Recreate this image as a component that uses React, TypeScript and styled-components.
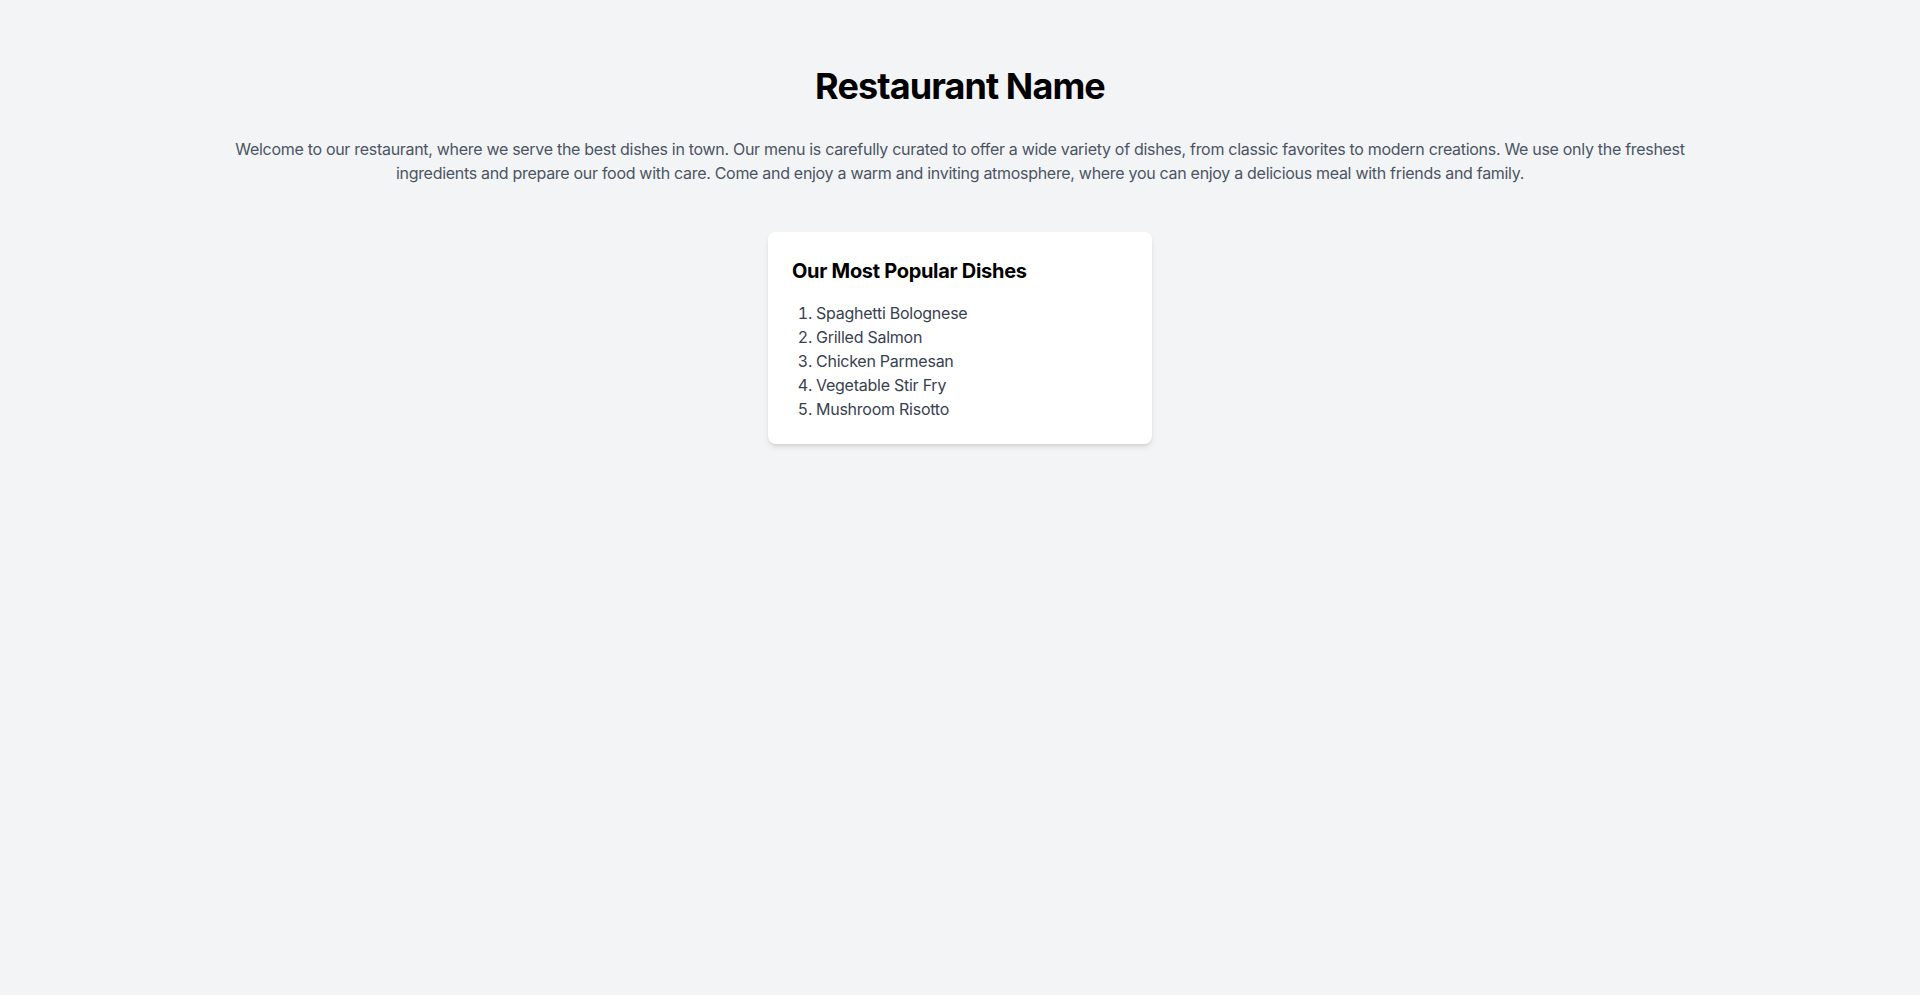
import React from "react";
import styled, { createGlobalStyle } from "styled-components";

const GlobalStyle = createGlobalStyle`
  *, *::before, *::after { box-sizing: border-box; }
  html, body { margin: 0; padding: 0; }
  body {
    background: #f3f4f6;
    font-family: Inter, "Noto Sans", "Liberation Sans", sans-serif;
    -webkit-font-smoothing: antialiased;
  }
`;

const Page = styled.div`
  min-height: 995px;
  background: #f3f4f6;
`;

const Container = styled.main`
  max-width: 1536px;
  margin: 0 auto;
  padding: 64px 16px;
  display: flex;
  flex-direction: column;
  align-items: center;
`;

const Title = styled.h1`
  margin: 0 0 30px;
  padding-top: 2px;
  font-size: 36px;
  line-height: 40px;
  font-weight: 700;
  letter-spacing: -0.9px;
  color: #000;
  text-align: center;
`;

const Intro = styled.p`
  margin: 0 0 47px;
  padding-top: 1px;
  font-size: 16px;
  line-height: 24px;
  letter-spacing: -0.3px;
  color: #4b5563;
  text-align: center;
`;

const Card = styled.section`
  width: 384px;
  background: #fff;
  border-radius: 8px;
  padding: 25px 24px 23px;
  box-shadow: 0 4px 6px -1px rgba(0, 0, 0, 0.1), 0 2px 4px -2px rgba(0, 0, 0, 0.1);
`;

const CardTitle = styled.h2`
  margin: 0 0 16px;
  font-size: 20px;
  line-height: 28px;
  font-weight: 700;
  letter-spacing: -0.3px;
  color: #000;
`;

const DishList = styled.ol`
  margin: 0;
  padding-left: 24px;
  list-style: decimal outside;
`;

const Dish = styled.li`
  font-size: 16px;
  line-height: 24px;
  letter-spacing: -0.25px;
  color: #374151;
`;

const dishes = [
  "Spaghetti Bolognese",
  "Grilled Salmon",
  "Chicken Parmesan",
  "Vegetable Stir Fry",
  "Mushroom Risotto",
];

export default function App() {
  return (
    <Page>
      <GlobalStyle />
      <Container>
        <Title>Restaurant Name</Title>
        <Intro>
          Welcome to our restaurant, where we serve the best dishes in town. Our menu is carefully curated to offer a wide variety of dishes, from classic favorites to modern creations. We use only the freshest ingredients and prepare our food with care. Come and enjoy a warm and inviting atmosphere, where you can enjoy a delicious meal with friends and family.
        </Intro>
        <Card>
          <CardTitle>Our Most Popular Dishes</CardTitle>
          <DishList>
            {dishes.map((d) => (
              <Dish key={d}>{d}</Dish>
            ))}
          </DishList>
        </Card>
      </Container>
    </Page>
  );
}
